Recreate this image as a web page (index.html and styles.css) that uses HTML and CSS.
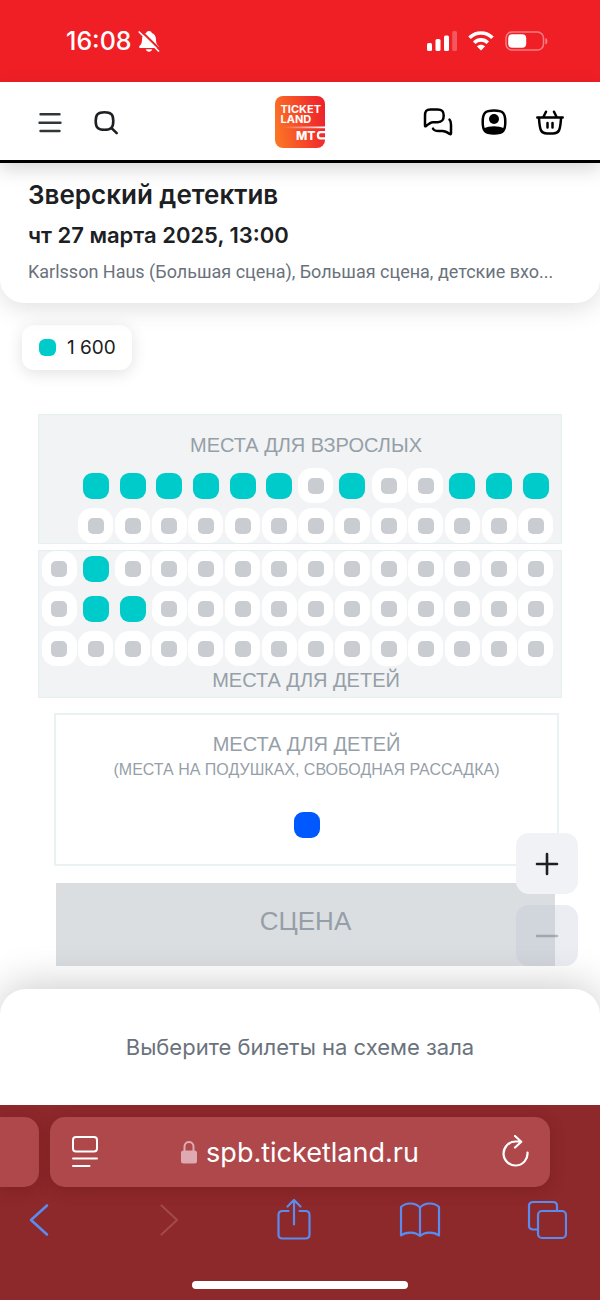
FILE: index.html
```html
<!DOCTYPE html>
<html lang="ru">
<head>
<meta charset="utf-8">
<meta name="viewport" content="width=device-width, initial-scale=1">
<title>Зверский детектив</title>
<link rel="stylesheet" href="styles.css">
</head>
<body>
<div class="status">
  <div class="status-group status-time">
    <span>16:08</span>
    <svg width="22" height="24" viewBox="0 0 22 24" aria-hidden="true"><path fill="#fff" d="M11 2c1.600 0 2.600.9 2.800 2 2.900 1 4.200 3.600 4.200 6.500 0 3.900 1.200 5.200 2.500 6.500.8.900.5 2-.8 2H2.300c-1.300 0-1.600-1.100-.8-2C2.800 15.700 4 14.400 4 10.500 4 7.600 5.300 5 8.200 4 8.400 2.900 9.400 2 11 2zM7.800 20.300h6.400c-.3 1.500-1.600 2.400-3.200 2.400s-2.900-.9-3.200-2.400z"/><path d="M2.500 1.500 22 20.500" stroke="#f01f26" stroke-width="2"/><path d="M1.200 3 20.500 22" stroke="#fff" stroke-width="1.700" stroke-linecap="round"/></svg>
  </div>
  <div class="status-group status-signals">
    <svg width="30" height="20" viewBox="0 0 30 20" fill="#fff" aria-hidden="true"><rect y="12" width="5" height="8" rx="1.500"/><rect x="8.500" y="8" width="5" height="12" rx="1.500"/><rect x="17" y="4.500" width="5" height="15.500" rx="1.500"/><rect x="25.200" y="0" width="4.800" height="20" rx="1.500" opacity=".25"/></svg>
    <svg width="26" height="20" viewBox="0 0 26 20" fill="none" stroke="#fff" aria-hidden="true"><path d="M1.500 6.800c6.500-6.400 16.500-6.400 23 0M6.200 11.700c3.900-3.800 9.700-3.800 13.600 0" stroke-width="3.600"/><path d="M13 19.500 8.800 15.300c2.400-2.100 6-2.100 8.400 0z" fill="#fff" stroke="none"/></svg>
    <svg width="43" height="20" viewBox="0 0 43 20" aria-hidden="true"><rect x="1" y="1" width="37.500" height="18" rx="6" fill="none" stroke="#fff" stroke-width="1.500" opacity=".42"/><rect x="3.200" y="3.200" width="18" height="13.600" rx="4" fill="#fff"/><path d="M40.500 7v6.500c2.400-.8 2.400-5.700 0-6.500z" fill="#fff" opacity=".5"/></svg>
  </div>
</div>

<header class="header">
  <div class="header-side">
    <button class="icon-btn" type="button" aria-label="Меню"><svg width="30" height="30" viewBox="0 0 30 30" fill="none" stroke="#333639" stroke-width="2.400" stroke-linecap="round"><path d="M5.500 7.200h19M4.500 15.700h21M5.500 24h19"/></svg></button>
    <button class="icon-btn" type="button" aria-label="Поиск"><svg width="30" height="30" viewBox="0 0 30 30" fill="none" stroke="#1d2023" stroke-width="2.600" stroke-linecap="round"><path d="M13.500 5.200c6.500 0 8.800 2.300 8.800 8.800s-2.300 8.800-8.800 8.800-8.800-2.300-8.800-8.800 2.300-8.800 8.800-8.800zM20.300 20.800l5.400 5.400"/></svg></button>
  </div>
  <a class="logo" href="#" aria-label="Ticketland МТС">
    <svg width="50" height="52" viewBox="0 0 50 52"><defs><linearGradient id="lg" x1="0" x2="1" y1=".6" y2=".4"><stop offset="0" stop-color="#fb7425"/><stop offset=".75" stop-color="#f2352b"/><stop offset="1" stop-color="#ee242c"/></linearGradient><linearGradient id="ln" x1="0" x2="1"><stop offset="0" stop-color="#fff" stop-opacity="0"/><stop offset="1" stop-color="#fff"/></linearGradient></defs><rect width="50" height="52" rx="8" fill="url(#lg)"/><path fill="url(#ln)" d="M8 30.500h42v1.700H8z"/><g class="logo-text"><text x="5.500" y="16.500">TICKET</text><text x="5.500" y="26.500">LAND</text><text class="logo-mts" x="21" y="43.500">МТ</text></g><path d="M50 36.200h-4.500c-3.500 0-3.500 6.200 0 6.200H50" fill="none" stroke="#fff" stroke-width="2.300"/></svg>
  </a>
  <div class="header-side header-right">
    <button class="icon-btn" type="button" aria-label="Чат"><svg width="30" height="30" viewBox="0 0 30 30" fill="none" stroke="#000" stroke-width="2.500" stroke-linecap="round" stroke-linejoin="round"><path d="M7.500 2.600h7c4.500 0 6.200 1.300 6.200 6s-1.600 6.600-6 6.600H9.800C8.300 15.200 6 16.500 2.800 19.200c-.5.300-.8 0-.8-.7V9c0-4.600 1-6.400 5.500-6.400zM26.500 12.700c1.200 1.200 1.500 2.700 1.500 5v8.500c0 1-.5 1.200-1.300.7-3.200-2.300-4.700-3-7.200-3h-3.800c-3 0-5-.5-5.700-2.300"/></svg></button>
    <button class="icon-btn" type="button" aria-label="Профиль"><svg width="30" height="30" viewBox="0 0 30 30"><path d="M15 3.500c9 0 11.300 2.300 11.300 11.500S24 26.500 15 26.500 3.700 24.200 3.700 15 6 3.500 15 3.500z" fill="none" stroke="#000" stroke-width="2.500"/><circle cx="15" cy="12" r="5" fill="#000"/><path d="M4.500 21.500c6.500-3 14.500-3 21 0-.8 4.500-3.600 5.500-10.500 5.500s-9.700-1-10.500-5.500z"/></svg></button>
    <button class="icon-btn" type="button" aria-label="Корзина"><svg width="30" height="30" viewBox="0 0 30 30" fill="none" stroke="#000" stroke-width="2.500" stroke-linecap="round"><path d="M2.300 10.500h25.400M4 11.500c.8 11.700 1.800 15 8 15h6c6.200 0 7.200-3.300 8-15M8.500 9.700 11 4.700M21.500 9.700 19 4.700M12.500 16v4.500M17.500 16v4.500"/></svg></button>
  </div>
</header>

<section class="event">
  <h1 class="event-title">Зверский детектив</h1>
  <p class="event-date">чт 27 марта 2025, 13:00</p>
  <p class="event-place">Karlsson Haus (Большая сцена), Большая сцена, детские вхо...</p>
</section>

<main class="hall">
  <div class="price"><span class="price-mark"></span>1 600</div>

  <div class="plan">
    <section class="block block-adult">
      <h2 class="caption">МЕСТА ДЛЯ ВЗРОСЛЫХ</h2>
      <div class="seats" data-rows=" ++++++o+oo+++| ooooooooooooo"></div>
    </section>
    <section class="block block-child">
      <div class="seats" data-rows="o+oooooooooooo|o++ooooooooooo|oooooooooooooo"></div>
      <h2 class="caption">МЕСТА ДЛЯ ДЕТЕЙ</h2>
    </section>
    <section class="cushions">
      <h2 class="caption">МЕСТА ДЛЯ ДЕТЕЙ</h2>
      <p class="caption caption-small">(МЕСТА НА ПОДУШКАХ, СВОБОДНАЯ РАССАДКА)</p>
      <button class="seat seat-zone" type="button" aria-label="Места на подушках"></button>
    </section>
    <div class="stage">СЦЕНА</div>
  </div>

  <div class="zoom">
    <button class="zoom-btn" type="button" aria-label="Увеличить"><svg width="24" height="24" viewBox="0 0 24 24" stroke="#1d2023" stroke-width="2.600" stroke-linecap="round"><path d="M2 12h20M12 2v20"/></svg></button>
    <button class="zoom-btn" type="button" aria-label="Уменьшить" disabled><svg width="24" height="24" viewBox="0 0 24 24" stroke="#5d6470" stroke-width="2.600" stroke-linecap="round"><path d="M2 12h20"/></svg></button>
  </div>
</main>

<section class="sheet">Выберите билеты на схеме зала</section>

<footer class="browser">
  <div class="tabs">
    <div class="tab-prev"></div>
    <div class="address">
      <button class="icon-btn" type="button" aria-label="Настройки страницы"><svg width="30" height="34" viewBox="0 0 30 34" fill="none" stroke="#fff" stroke-width="2" stroke-linecap="round"><rect x="4" y="2" width="24" height="14.500" rx="3"/><path d="M4 23.500h24M4 31h16.500"/></svg></button>
      <a class="url" href="#"><svg width="16" height="24" viewBox="0 0 16 24" aria-hidden="true"><path d="M3.500 12V6.500c0-6 9-6 9 0V12" fill="none" stroke="#dea9b0" stroke-width="2"/><rect y="10.500" width="16" height="13" rx="2.500" fill="#dea9b0"/></svg>spb.ticketland.ru</a>
      <button class="icon-btn" type="button" aria-label="Обновить"><svg width="30" height="34" viewBox="0 0 30 34" fill="none" stroke="#fff" stroke-width="2.200" stroke-linecap="round" stroke-linejoin="round"><path d="M26.500 17.500A12 12 0 1 1 14.500 6.500H20M14 1l6.300 5.700-6.300 5.800"/></svg></button>
    </div>
  </div>
  <nav class="toolbar">
    <button class="icon-btn" type="button" aria-label="Назад"><svg width="40" height="44" viewBox="0 0 40 44" fill="none" stroke="#5a8cf0" stroke-width="2.600" stroke-linecap="round" stroke-linejoin="round"><path d="M27 7.500 11 22l16 14.500"/></svg></button>
    <button class="icon-btn" type="button" aria-label="Вперёд" disabled><svg width="40" height="44" viewBox="0 0 40 44" fill="none" stroke="#a2494c" stroke-width="2.200" stroke-linecap="round" stroke-linejoin="round"><path d="M15.500 7.500 31 22 15.500 36.500"/></svg></button>
    <button class="icon-btn" type="button" aria-label="Поделиться"><svg width="40" height="44" viewBox="0 0 40 44" fill="none" stroke="#5a8cf0" stroke-width="2.200" stroke-linecap="round" stroke-linejoin="round"><path d="M15.500 13H9.500c-2.500 0-4 1.300-4 3.800v20c0 2.500 1.500 3.700 4 3.700h23c2.500 0 4-1.200 4-3.700v-20c0-2.500-1.500-3.800-4-3.800h-6M21 26.500V2M14.500 8.500 21 2l6.500 6.500"/></svg></button>
    <button class="icon-btn" type="button" aria-label="Закладки"><svg width="42" height="44" viewBox="0 0 42 44" fill="none" stroke="#5a8cf0" stroke-width="2.200" stroke-linejoin="round"><path d="M21 9.500C16 4 6.500 4.500 2 9v28.500C7 33.500 16 33.500 21 38c5-4.500 14-4.500 19-.500V9C35.500 4.500 26 4 21 9.500zM21 9.500V38"/></svg></button>
    <button class="icon-btn" type="button" aria-label="Вкладки"><svg width="40" height="44" viewBox="0 0 40 44" fill="none" stroke="#5a8cf0" stroke-width="2.200"><rect x="11" y="13" width="28" height="27" rx="4"/><path d="M11 31.500H6.500C3.500 31.500 2 30 2 27.500V8c0-2.500 1.500-4 4.500-4h19.500c2.500 0 4 1.500 4 4v5"/></svg></button>
  </nav>
  <div class="home-bar"></div>
</footer>
<script src="seats.js"></script>
</body>
</html>
```
FILE: styles.css
```css
* { box-sizing: border-box; }
body {
  margin: 0;
  min-height: 100vh;
  display: flex;
  flex-direction: column;
  background: #fff;
  color: #1d2023;
  font-family: Inter, "Liberation Sans", sans-serif;
}
h1, h2, p { margin: 0; }
button { font: inherit; border: 0; padding: 0; background: none; }
a { color: inherit; text-decoration: none; }
svg { display: block; flex: none; }
.icon-btn { display: block; flex: none; }

.status {
  height: 82px;
  padding: 0 52px 0 66px;
  display: flex;
  align-items: center;
  justify-content: space-between;
  background: #f01f26;
  color: #fff;
}
.status-group { display: flex; align-items: center; }
.status-time { gap: 6px; font-size: 25px; font-weight: 500; }
.status-signals { gap: 11px; }

.header {
  position: relative;
  z-index: 2;
  display: flex;
  align-items: center;
  padding: 14px 35px 12px;
  border-bottom: 3px solid #000;
  background: #fff;
  box-shadow: 0 6px 18px rgba(0, 0, 0, .16);
}
.header-side { flex: 1; display: flex; gap: 26px; }
.header-right { justify-content: flex-end; }
.logo-text { fill: #fff; font: 700 11px Inter, sans-serif; }
.logo-mts { font-size: 12px; font-weight: 800; }

.event {
  position: relative;
  z-index: 1;
  padding: 14px 28px 17px;
  background: #fff;
  border-radius: 0 0 24px 24px;
  box-shadow: 0 6px 24px rgba(0, 0, 0, .12);
}
.event-title { font-size: 26px; line-height: 36px; font-weight: 600; }
.event-date { margin-top: 4px; font-size: 22px; line-height: 36px; font-weight: 600; }
.event-place {
  margin-top: 4px;
  font-family: Roboto, Inter, sans-serif;
  font-size: 18px;
  line-height: 29px;
  color: #6a727c;
  white-space: nowrap;
  overflow: hidden;
  text-overflow: ellipsis;
}

.hall { position: relative; flex: 1; padding: 22px 22px 0; }
.price {
  width: fit-content;
  display: flex;
  align-items: center;
  gap: 11px;
  padding: 0 16px 0 17px;
  font-size: 19px;
  line-height: 45px;
  background: #fff;
  border-radius: 12px;
  box-shadow: 0 3px 16px rgba(0, 0, 0, .12);
}
.price-mark { width: 17px; height: 17px; border-radius: 6px; background: #00cbcb; }

.plan { padding: 44px 16px 22px; font-family: "Liberation Sans", Arial, sans-serif; color: #969fa8; }
.block { background: #f1f3f4; border: 1px solid #e6efef; padding: 0 7px 0 2px; }
.block-child { margin-top: 6px; }
.block .caption { padding-left: 17px; }
.block-child .caption { padding-top: 2px; margin-bottom: 5px; }
.block-adult .caption { padding-top: 18px; padding-bottom: 11px; }
.caption {
  font-size: 20px;
  line-height: 24px;
  font-weight: 400;
  text-align: center;
}
.seats { display: grid; grid-template-columns: repeat(14, 1fr); grid-auto-rows: 35px; row-gap: 5px; place-items: center; }
.seat { width: 26px; height: 26px; border-radius: 9px; background: #00cbcb; }
.seat-taken {
  width: 35px;
  height: 35px;
  display: grid;
  place-items: center;
  border-radius: 14px;
  background: #fff;
}
.seat-taken::before { content: ""; width: 16px; height: 16px; border-radius: 5px; background: #c9ccd1; }
.cushions {
  margin: 15px 3px 0 16px;
  padding: 17px 0 26px;
  border: 2px solid #e9f1f3;
  display: flex;
  flex-direction: column;
  align-items: center;
}
.caption-small { font-size: 16px; line-height: 28px; }
.seat-zone { background: #0059ff; margin-top: 28px; }
.stage {
  margin: 17px 7px 0 18px;
  background: #dadee1;
  font-size: 26px;
  line-height: 76px;
  padding-bottom: 7px;
  text-align: center;
}

.zoom { position: absolute; right: 22px; bottom: 23px; display: grid; gap: 11px; }
.zoom-btn { width: 62px; height: 61px; display: grid; place-items: center; border-radius: 13px; background: #f1f2f6; }
.zoom-btn:disabled { background: rgba(188, 190, 207, .28); }
.zoom-btn:disabled svg { opacity: .4; }

.sheet {
  position: relative;
  z-index: 1;
  padding: 44px 28px;
  background: #fff;
  border-radius: 26px 26px 0 0;
  box-shadow: 0 -4px 40px rgba(0, 0, 0, .2);
  color: #6a727c;
  font-size: 22px;
  line-height: 28px;
  text-align: center;
}

.browser { position: relative; z-index: 2; background: #8d282b; padding: 12px 0 11px; }
.tabs { display: flex; gap: 11px; padding-right: 50px; }
.tab-prev, .address { background: #ae484b; box-shadow: 0 3px 16px rgba(80, 0, 0, .22); }
.tab-prev { width: 39px; border-radius: 0 15px 15px 0; }
.address {
  flex: 1;
  height: 70px;
  padding: 0 19px;
  display: flex;
  align-items: center;
  justify-content: space-between;
  border-radius: 15px;
}
.url { display: flex; align-items: center; gap: 9px; color: #fff; font-size: 27px; }
.toolbar { display: flex; justify-content: space-between; padding: 11px 33px 0 20px; }
.home-bar { width: 36%; height: 8px; margin: 39px auto 0; border-radius: 4px; background: #fff; }
```
FILE: seats.js
```js
// "+" is a free seat, "o" a taken one, a space is an empty place; rows are split by "|".
document.querySelectorAll('.seats').forEach(function (box) {
  box.dataset.rows.split('|').forEach(function (row, r) {
    Array.from(row).forEach(function (mark, c) {
      var cell = document.createElement(mark === ' ' ? 'span' : 'button');
      if (mark !== ' ') {
        cell.type = 'button';
        cell.className = mark === 'o' ? 'seat seat-taken' : 'seat';
        cell.disabled = mark === 'o';
        cell.setAttribute('aria-label', 'Ряд ' + (r + 1) + ', место ' + (c + 1));
      }
      box.appendChild(cell);
    });
  });
});
```
